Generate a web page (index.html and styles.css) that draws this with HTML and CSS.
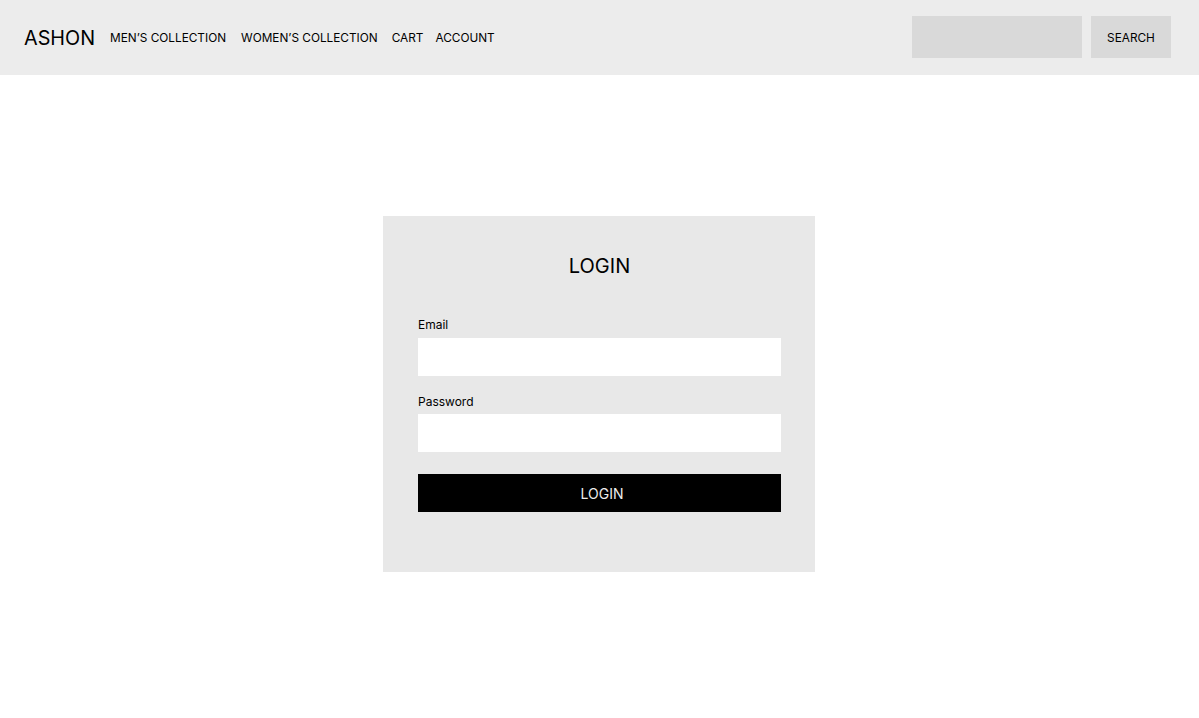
FILE: index.html
```html
<!DOCTYPE html>
<html>
<head>
<meta charset="utf-8">
<link rel="stylesheet" href="styles.css">
</head>
<body>
<header class="topbar">
  <div class="brand">ASHON</div>
  <nav class="nav">
    <a class="nav-link nav-men" href="#">MEN’S COLLECTION</a>
    <a class="nav-link nav-women" href="#">WOMEN’S COLLECTION</a>
    <a class="nav-link nav-cart" href="#">CART</a>
    <a class="nav-link" href="#">ACCOUNT</a>
  </nav>
  <div class="search">
    <input class="search-input" type="text">
    <button class="search-btn">SEARCH</button>
  </div>
</header>
<main class="main">
  <form class="card">
    <h1 class="card-title">LOGIN</h1>
    <div class="field">
      <label class="field-label">Email</label>
      <input class="field-input" type="text">
    </div>
    <div class="field field-pw">
      <label class="field-label">Password</label>
      <input class="field-input" type="password">
    </div>
    <button class="login-btn" type="button">LOGIN</button>
  </form>
</main>
</body>
</html>
```
FILE: styles.css
```css
* { box-sizing: border-box; }
html, body { margin: 0; padding: 0; }
body {
  font-family: Inter, "Liberation Sans", sans-serif;
  color: #000;
  background: #fff;
  width: 1199px;
  height: 718px;
  overflow: hidden;
}
.topbar {
  height: 75px;
  background: #ececec;
  display: flex;
  align-items: center;
  padding: 0 28px 0 24px;
}
.brand {
  font-size: 19.8px;
  line-height: 24px;
  margin-right: 15px;
}
.nav {
  display: flex;
  align-items: center;
  flex: 1;
  padding-top: 2px;
}
.nav-link {
  font-size: 11.8px;
  color: #000;
  text-decoration: none;
  line-height: 15px;
  margin-right: 14px;
}
.nav-men { margin-right: 15px; }
.nav-cart { margin-right: 12px; }
.search {
  display: flex;
  gap: 9px;
  margin-top: -1px;
}
.search-input {
  width: 170px;
  height: 42px;
  border: none;
  background: #d9d9d9;
  outline: none;
  padding: 0;
  margin: 0;
}
.search-btn {
  width: 80px;
  height: 42px;
  border: none;
  background: #d9d9d9;
  font-family: inherit;
  font-size: 11.8px;
  color: #000;
  padding: 2px 0 0;
  margin: 0;
}
.main {
  display: flex;
  justify-content: center;
  padding: 141px 1px 0 0;
}
.card {
  width: 432px;
  height: 356px;
  background: #e8e8e8;
  padding: 38px 34px 0 35px;
  margin: 0;
}
.card-title {
  font-size: 20px;
  line-height: 24px;
  font-weight: 400;
  text-align: center;
  margin: 0 0 39px;
}
.field {
  display: flex;
  flex-direction: column;
}
.field-pw { margin-top: 18px; }
.field-label {
  font-size: 12px;
  line-height: 15px;
  margin-bottom: 6px;
}
.field-pw .field-label { margin-bottom: 5px; }
.field-input {
  height: 38px;
  border: none;
  background: #fff;
  outline: none;
  padding: 0 8px;
  margin: 0;
}
.login-btn {
  display: block;
  width: 100%;
  height: 38px;
  margin-top: 22px;
  border: none;
  background: #000;
  color: #ececec;
  font-family: inherit;
  font-size: 14px;
  padding: 0 0 0 5px;
}
```
